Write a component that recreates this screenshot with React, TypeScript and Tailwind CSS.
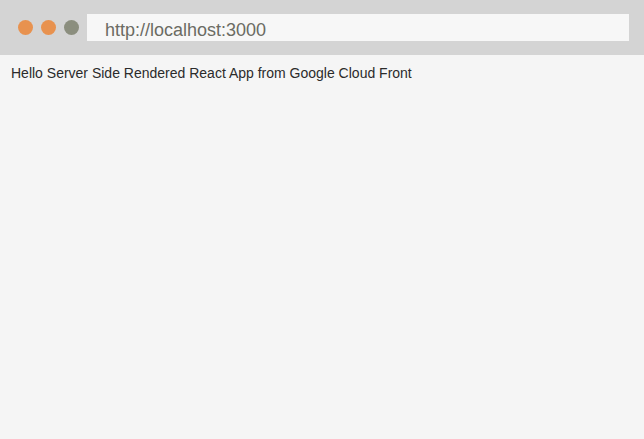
export default function App() {
  return (
    <div className="w-[644px] h-[439px] flex flex-col bg-[#f5f5f5] overflow-hidden" style={{ fontFamily: '"Liberation Sans", Arial, sans-serif' }}>
      <div className="h-[55px] bg-[#d4d4d4] flex items-center pl-[18px] pr-[15px] shrink-0">
        <div className="flex gap-[8px] items-center">
          <div className="w-[15px] h-[15px] rounded-full bg-[#e8924f]" />
          <div className="w-[15px] h-[15px] rounded-full bg-[#e8924f]" />
          <div className="w-[15px] h-[15px] rounded-full bg-[#8b8e7e]" />
        </div>
        <div className="ml-[8px] flex-1 h-[27px] bg-[#f7f7f7] pl-[18px] pt-[5px] text-[18px] leading-[22px] text-[#6b6b63]">
          http://localhost:3000
        </div>
      </div>
      <div className="pl-[11px] pt-[10px] text-[14px] leading-[16px] text-[#2b2b2b]">
        Hello Server Side Rendered React App from Google Cloud Front
      </div>
    </div>
  );
}
